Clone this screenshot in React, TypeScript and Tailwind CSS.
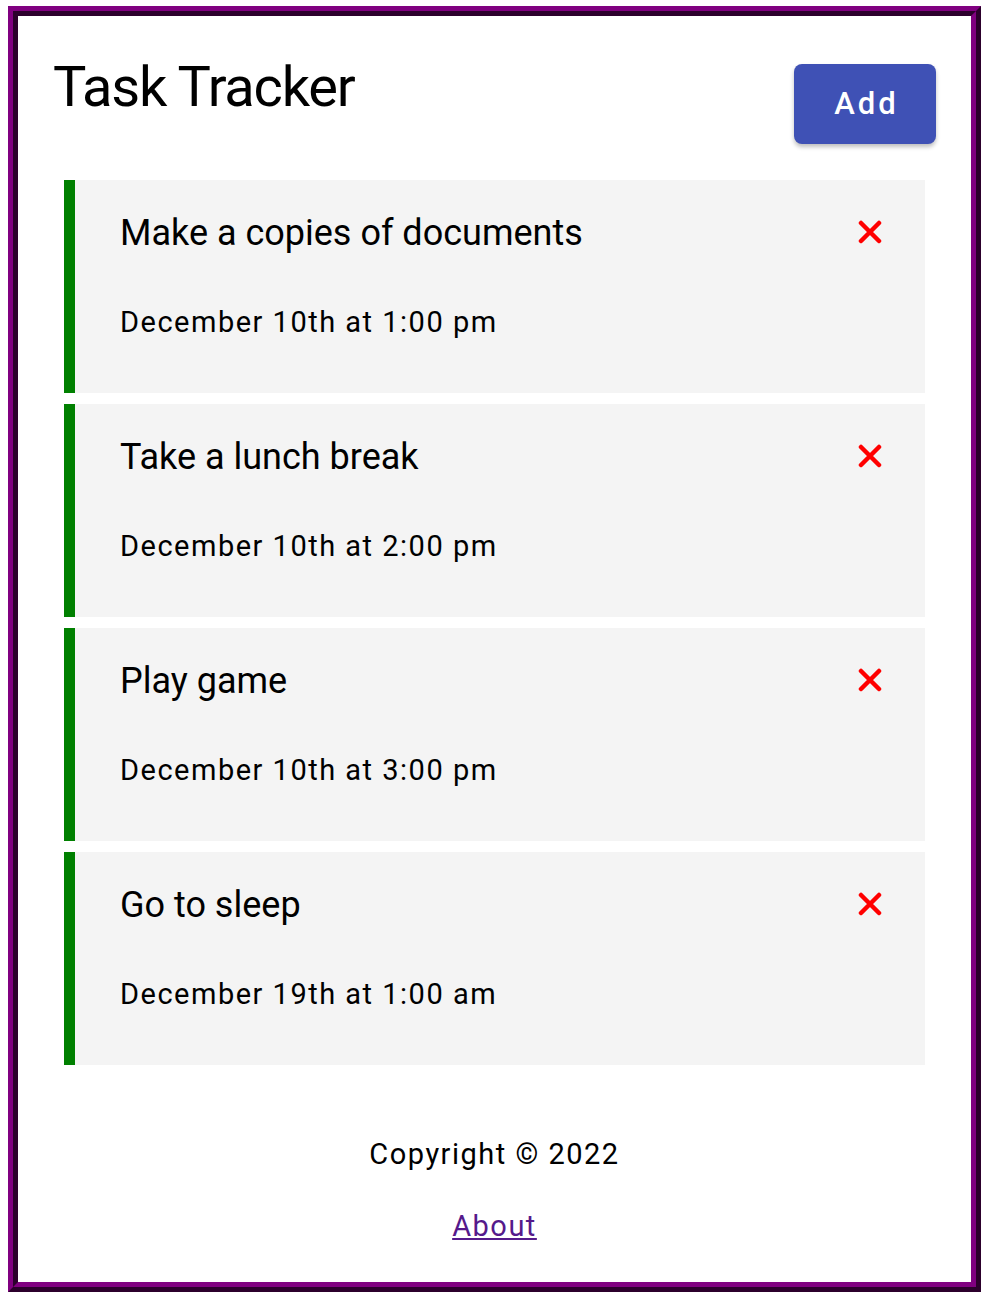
import React from 'react';

const tasks = [
  { id: 1, text: 'Make a copies of documents', day: 'December 10th at 1:00 pm' },
  { id: 2, text: 'Take a lunch break', day: 'December 10th at 2:00 pm' },
  { id: 3, text: 'Play game', day: 'December 10th at 3:00 pm' },
  { id: 4, text: 'Go to sleep', day: 'December 19th at 1:00 am' },
];

const CloseIcon = () => (
  <svg width="24" height="24" viewBox="0 0 24 24" className="block">
    <path d="M3 3 L21 21 M21 3 L3 21" stroke="#ff0000" strokeWidth="4.5" strokeLinecap="round" fill="none" />
  </svg>
);

const Task = ({ task }: { task: { id: number; text: string; day: string } }) => (
  <div className="h-[213px] bg-[#f4f4f4] border-l-[11px] border-[#008000] pl-[45px] pr-[43px] pt-[35px]">
    <div className="flex items-start justify-between">
      <h3 className="text-[36px] leading-none font-normal text-black">{task.text}</h3>
      <button className="mt-[5px] cursor-pointer">
        <CloseIcon />
      </button>
    </div>
    <p className="mt-[57px] text-[29px] leading-none tracking-[1.5px] text-black">{task.day}</p>
  </div>
);

export default function App() {
  return (
    <div className="bg-white" style={{ fontFamily: 'Roboto, "Liberation Sans", sans-serif' }}>
      <div className="ml-[8px] mt-[6px] w-[973px] h-[1286px] border-[10px] border-[#800080] [border-style:ridge] px-[35px]">
        {/* Header */}
        <header className="flex items-start justify-between pt-[43px]">
          <h1 className="text-[56px] leading-none font-normal tracking-[-1.25px] text-black">Task Tracker</h1>
          <button className="mt-[5px] w-[142px] h-[80px] rounded-[8px] bg-[#3f51b5] text-white text-[31px] font-medium tracking-[3px] pl-[3px] shadow-[0_3px_4px_rgba(0,0,0,0.25)] cursor-pointer">
            Add
          </button>
        </header>

        {/* Tasks */}
        <div className="mt-[36px] mx-[11px] flex flex-col gap-[11px]">
          {tasks.map((t) => (
            <Task key={t.id} task={t} />
          ))}
        </div>

        {/* Footer */}
        <footer className="mt-[75px] flex flex-col items-center">
          <p className="text-[29px] leading-none tracking-[1.5px] text-black">Copyright &copy; 2022</p>
          <a href="#" className="mt-[43px] text-[29px] leading-none tracking-[1.5px] text-[#551a8b] underline">
            About
          </a>
        </footer>
      </div>
    </div>
  );
}
